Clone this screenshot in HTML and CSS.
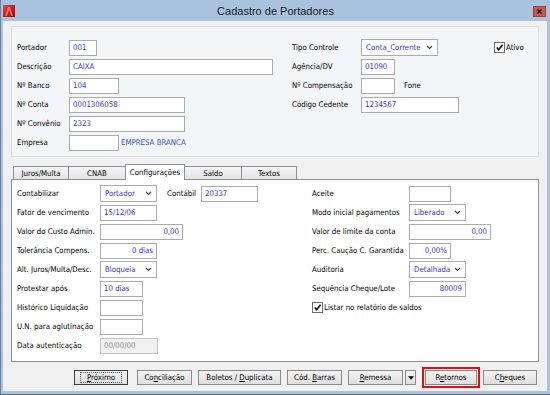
FILE: index.html
```html
<!DOCTYPE html>
<html lang="pt-BR">
<head>
    <meta charset="UTF-8">
    <title>Cadastro de Portadores</title>
    <link rel="stylesheet" href="styles.css">
</head>
<body>
    <div class="window">
        <div class="titlebar">
            <svg class="app-icon" viewBox="0 0 12 12">
                <defs>
                    <linearGradient id="ico" x1="0" y1="0" x2="1" y2="1">
                        <stop offset="0" stop-color="#f04040"/>
                        <stop offset="1" stop-color="#a00000"/>
                    </linearGradient>
                </defs>
                <rect x="0" y="0" width="12" height="12" fill="url(#ico)"/>
                <path d="M2 11 L5 2 L7 2 L10 11 L8 11 L6 5 L4 11 Z" fill="#ff8a8a" opacity="0.7"/>
            </svg>
            <div class="title">Cadastro de Portadores</div>
            <div class="close">
                <svg viewBox="0 0 12 11"><path d="M3.5 3 L8.5 8 M8.5 3 L3.5 8" stroke="#1a1a1a" stroke-width="1.8"/></svg>
            </div>
        </div>

        <div class="client">
            <div class="panel">
                <div class="col col-top-l">
                    <div class="row"><span class="lbl lbl-top-l">Portador</span><span class="field w28">001</span></div>
                    <div class="row"><span class="lbl lbl-top-l">Descrição</span><span class="field w204">CAIXA</span></div>
                    <div class="row"><span class="lbl lbl-top-l">Nº Banco</span><span class="field w50">104</span></div>
                    <div class="row"><span class="lbl lbl-top-l">Nº Conta</span><span class="field w116">0001306058</span></div>
                    <div class="row"><span class="lbl lbl-top-l">Nº Convênio</span><span class="field w116">2323</span></div>
                    <div class="row"><span class="lbl lbl-top-l">Empresa</span><span class="field w50"></span><span class="link">EMPRESA BRANCA</span></div>
                </div>
                <div class="col col-top-r">
                    <div class="row">
                        <span class="lbl lbl-top-r">Tipo Controle</span>
                        <span class="field select w77">Conta_Corrente<svg class="chev" viewBox="0 0 7 5"><path d="M1 1 L3.5 3.5 L6 1" fill="none" stroke="#444" stroke-width="1.2"/></svg></span>
                        <span class="check check-ativo"><span class="box"><svg viewBox="0 0 10 10"><path d="M2 5 L4 7.5 L8.5 2" fill="none" stroke="#111" stroke-width="1.8"/></svg></span>Ativo</span>
                    </div>
                    <div class="row"><span class="lbl lbl-top-r">Agência/DV</span><span class="field w34">01090</span></div>
                    <div class="row"><span class="lbl lbl-top-r">Nº Compensação</span><span class="field w34"></span><span class="note">Fone</span></div>
                    <div class="row"><span class="lbl lbl-top-r">Código Cedente</span><span class="field w98">1234567</span></div>
                </div>
            </div>

            <div class="tabs">
                <div class="tab tab-juros">Juros/Multa</div>
                <div class="tab tab-cnab">CNAB</div>
                <div class="tab tab-config active">Configurações</div>
                <div class="tab tab-saldo">Saldo</div>
                <div class="tab tab-textos">Textos</div>
            </div>
            <div class="tabpage">
                <div class="col col-tab-l">
                    <div class="row">
                        <span class="lbl lbl-tab-l">Contabilizar</span>
                        <span class="field select w57">Portador<svg class="chev" viewBox="0 0 7 5"><path d="M1 1 L3.5 3.5 L6 1" fill="none" stroke="#444" stroke-width="1.2"/></svg></span>
                        <span class="lbl lbl-contabil">Contábil</span>
                        <span class="field w57">20337</span>
                    </div>
                    <div class="row"><span class="lbl lbl-tab-l">Fator de vencimento</span><span class="field w57">15/12/06</span></div>
                    <div class="row"><span class="lbl lbl-tab-l">Valor do Custo Admin.</span><span class="field num w83">0,00</span></div>
                    <div class="row"><span class="lbl lbl-tab-l">Tolerância Compens.</span><span class="field num w57">0 dias</span></div>
                    <div class="row">
                        <span class="lbl lbl-tab-l">Alt. Juros/Multa/Desc.</span>
                        <span class="field select w57">Bloqueia<svg class="chev" viewBox="0 0 7 5"><path d="M1 1 L3.5 3.5 L6 1" fill="none" stroke="#444" stroke-width="1.2"/></svg></span>
                    </div>
                    <div class="row"><span class="lbl lbl-tab-l">Protestar após</span><span class="field w43">10 dias</span></div>
                    <div class="row"><span class="lbl lbl-tab-l">Histórico Liquidação</span><span class="field w43"></span></div>
                    <div class="row"><span class="lbl lbl-tab-l">U.N. para aglutinação</span><span class="field w43"></span></div>
                    <div class="row"><span class="lbl lbl-tab-l">Data autenticação</span><span class="field disabled w58">00/00/00</span></div>
                </div>
                <div class="col col-tab-r">
                    <div class="row"><span class="lbl lbl-tab-r">Aceite</span><span class="field w42"></span></div>
                    <div class="row">
                        <span class="lbl lbl-tab-r">Modo inicial pagamentos</span>
                        <span class="field select w57">Liberado<svg class="chev" viewBox="0 0 7 5"><path d="M1 1 L3.5 3.5 L6 1" fill="none" stroke="#444" stroke-width="1.2"/></svg></span>
                    </div>
                    <div class="row"><span class="lbl lbl-tab-r">Valor de limite da conta</span><span class="field num w82">0,00</span></div>
                    <div class="row"><span class="lbl lbl-tab-r">Perc. Caução C. Garantida</span><span class="field num w42">0,00%</span></div>
                    <div class="row">
                        <span class="lbl lbl-tab-r">Auditoria</span>
                        <span class="field select w57">Detalhada<svg class="chev" viewBox="0 0 7 5"><path d="M1 1 L3.5 3.5 L6 1" fill="none" stroke="#444" stroke-width="1.2"/></svg></span>
                    </div>
                    <div class="row"><span class="lbl lbl-tab-r">Sequência Cheque/Lote</span><span class="field num w57">80009</span></div>
                    <div class="row">
                        <span class="check"><span class="box"><svg viewBox="0 0 10 10"><path d="M2 5 L4 7.5 L8.5 2" fill="none" stroke="#111" stroke-width="1.8"/></svg></span>Listar no relatório de saldos</span>
                    </div>
                </div>
            </div>

            <div class="buttons">
                <button class="btn btn-default w54"><span class="focus"><u>P</u>róximo</span></button>
                <button class="btn w55"><span>Co<u>n</u>ciliação</span></button>
                <button class="btn w83"><span>Boletos / <u>D</u>uplicata</span></button>
                <button class="btn w55"><span>Cód. <u>B</u>arras</span></button>
                <div class="split">
                    <button class="btn w55"><span><u>R</u>emessa</span></button>
                    <button class="btn btn-arrow"><svg viewBox="0 0 7 4"><path d="M0 0 H7 L3.5 4 Z" fill="#000"/></svg></button>
                </div>
                <button class="btn btn-marked w52"><span>R<u>e</u>tornos</span></button>
                <button class="btn w54"><span>C<u>h</u>eques</span></button>
            </div>
        </div>
    </div>
</body>
</html>
```

FILE: styles.css
```css
* {
    box-sizing: border-box;
}

body {
    margin: 0;
    font-family: "DejaVu Sans Condensed", "Liberation Sans", sans-serif;
    font-stretch: condensed;
    font-size: 7.8px;
    color: #000;
}

.window {
    width: 550px;
    height: 395px;
    background: #a9c2de;
    border-left: 1px solid #6f829b;
    border-bottom: 1px solid #5c6a7c;
    display: flex;
    flex-direction: column;
}

/* title bar */
.titlebar {
    height: 21px;
    display: grid;
    grid-template-columns: 1fr auto 1fr;
    align-items: center;
}

.app-icon {
    width: 12px;
    height: 12px;
    margin-left: 2px;
}

.title {
    font-family: "Liberation Sans", sans-serif;
    font-stretch: normal;
    font-size: 11px;
    color: #1a1a1a;
}

.close {
    justify-self: end;
    width: 13px;
    height: 11px;
    margin-right: 4px;
    margin-top: 2px;
    background: #c9584a;
    border: 1px solid #9e4034;
}

.close svg {
    display: block;
    width: 11px;
    height: 9px;
}

/* client area */
.client {
    flex: 1;
    margin: 0 3px 3px 2px;
    background: #f0f0f0;
    padding: 5px 8px 0 8px;
}

.panel {
    height: 131px;
    border: 1px solid #dadde2;
    background: #f4f5f6;
    display: flex;
    padding: 11px 0 0 5px;
}

.col-top-l { width: 275px; }
.col-tab-l { width: 295px; }

.row {
    display: flex;
    align-items: center;
    height: 19px;
    white-space: nowrap;
}

.lbl-top-l { width: 52px; }
.lbl-top-r { width: 69px; }
.lbl-tab-l { width: 83px; }
.lbl-tab-r { width: 97px; }

.lbl-contabil {
    width: 34px;
    margin-left: 10px;
}

.field {
    height: 16px;
    border: 1px solid #ababab;
    background: #fff;
    color: #3a33c8;
    padding: 0 3px;
    display: flex;
    align-items: center;
    flex-shrink: 0;
}

.field.num {
    justify-content: flex-end;
}

.field.select {
    justify-content: space-between;
    padding: 0 4px 0 4px;
    height: 17px;
}

.field.disabled {
    background: #f0f0f0;
    border-color: #c4c4c4;
    color: #8f8f8f;
}

.chev {
    width: 7px;
    height: 5px;
}

.w28 { width: 28px; }
.w34 { width: 34px; }
.w42 { width: 42px; }
.w43 { width: 43px; }
.w50 { width: 50px; }
.w52 { width: 52px; }
.w54 { width: 54px; }
.w55 { width: 55px; }
.w57 { width: 57px; }
.w58 { width: 58px; }
.w77 { width: 77px; }
.w82 { width: 82px; }
.w83 { width: 83px; }
.w98 { width: 98px; }
.w116 { width: 116px; }
.w204 { width: 204px; }

.link {
    color: #2f55c0;
    margin-left: 2px;
}

.note {
    margin-left: 9px;
}

.check {
    display: flex;
    align-items: center;
    gap: 1px;
}

.check-ativo {
    margin-left: 56px;
}

.box {
    width: 11px;
    height: 11px;
    border: 1px solid #6d6d6d;
    background: #fff;
}

.box svg {
    display: block;
    width: 9px;
    height: 9px;
}

/* tabs */
.tabs {
    display: flex;
    align-items: flex-end;
    height: 15px;
    margin-top: 7px;
    padding-left: 2px;
}

.tab {
    height: 13px;
    border: 1px solid #8d9099;
    border-bottom: none;
    margin-left: -1px;
    background: linear-gradient(#f5f5f5, #e4e4e4);
    display: flex;
    align-items: center;
    justify-content: center;
}

.tab:first-child { margin-left: 0; }

.tab.active {
    height: 16px;
    background: #fff;
    margin-bottom: -1px;
    position: relative;
    z-index: 1;
}

.tab-juros { width: 56px; }
.tab-cnab { width: 58px; }
.tab-config { width: 60px; }
.tab-saldo { width: 58px; }
.tab-textos { width: 56px; }

.tabpage {
    height: 183px;
    border: 1px solid #8d9099;
    background: #fff;
    display: flex;
    padding: 4px 0 0 5px;
}

/* buttons */
.buttons {
    display: flex;
    align-items: center;
    gap: 6px;
    margin-top: 8px;
    padding-left: 63px;
}

.btn {
    height: 15px;
    padding: 0;
    border: 1px solid #8a8a8a;
    border-radius: 0;
    background: linear-gradient(#f3f3f3, #dedede);
    font-family: inherit;
    font-stretch: condensed;
    font-size: 7.8px;
    color: #000;
    display: flex;
    align-items: center;
    justify-content: center;
    white-space: nowrap;
}

.btn-default {
    border-color: #3c3c3c;
    margin-right: 3px;
}

.btn-default .focus {
    border: 1px dotted #555;
    padding: 0 6px;
    line-height: 9px;
}

.split {
    display: flex;
    gap: 2px;
}

.btn-arrow {
    width: 11px;
}

.btn-arrow svg {
    width: 6px;
    height: 4px;
}

.btn-marked {
    outline: 2px solid #e01010;
    outline-offset: 1px;
    margin-left: 3px;
}
```
